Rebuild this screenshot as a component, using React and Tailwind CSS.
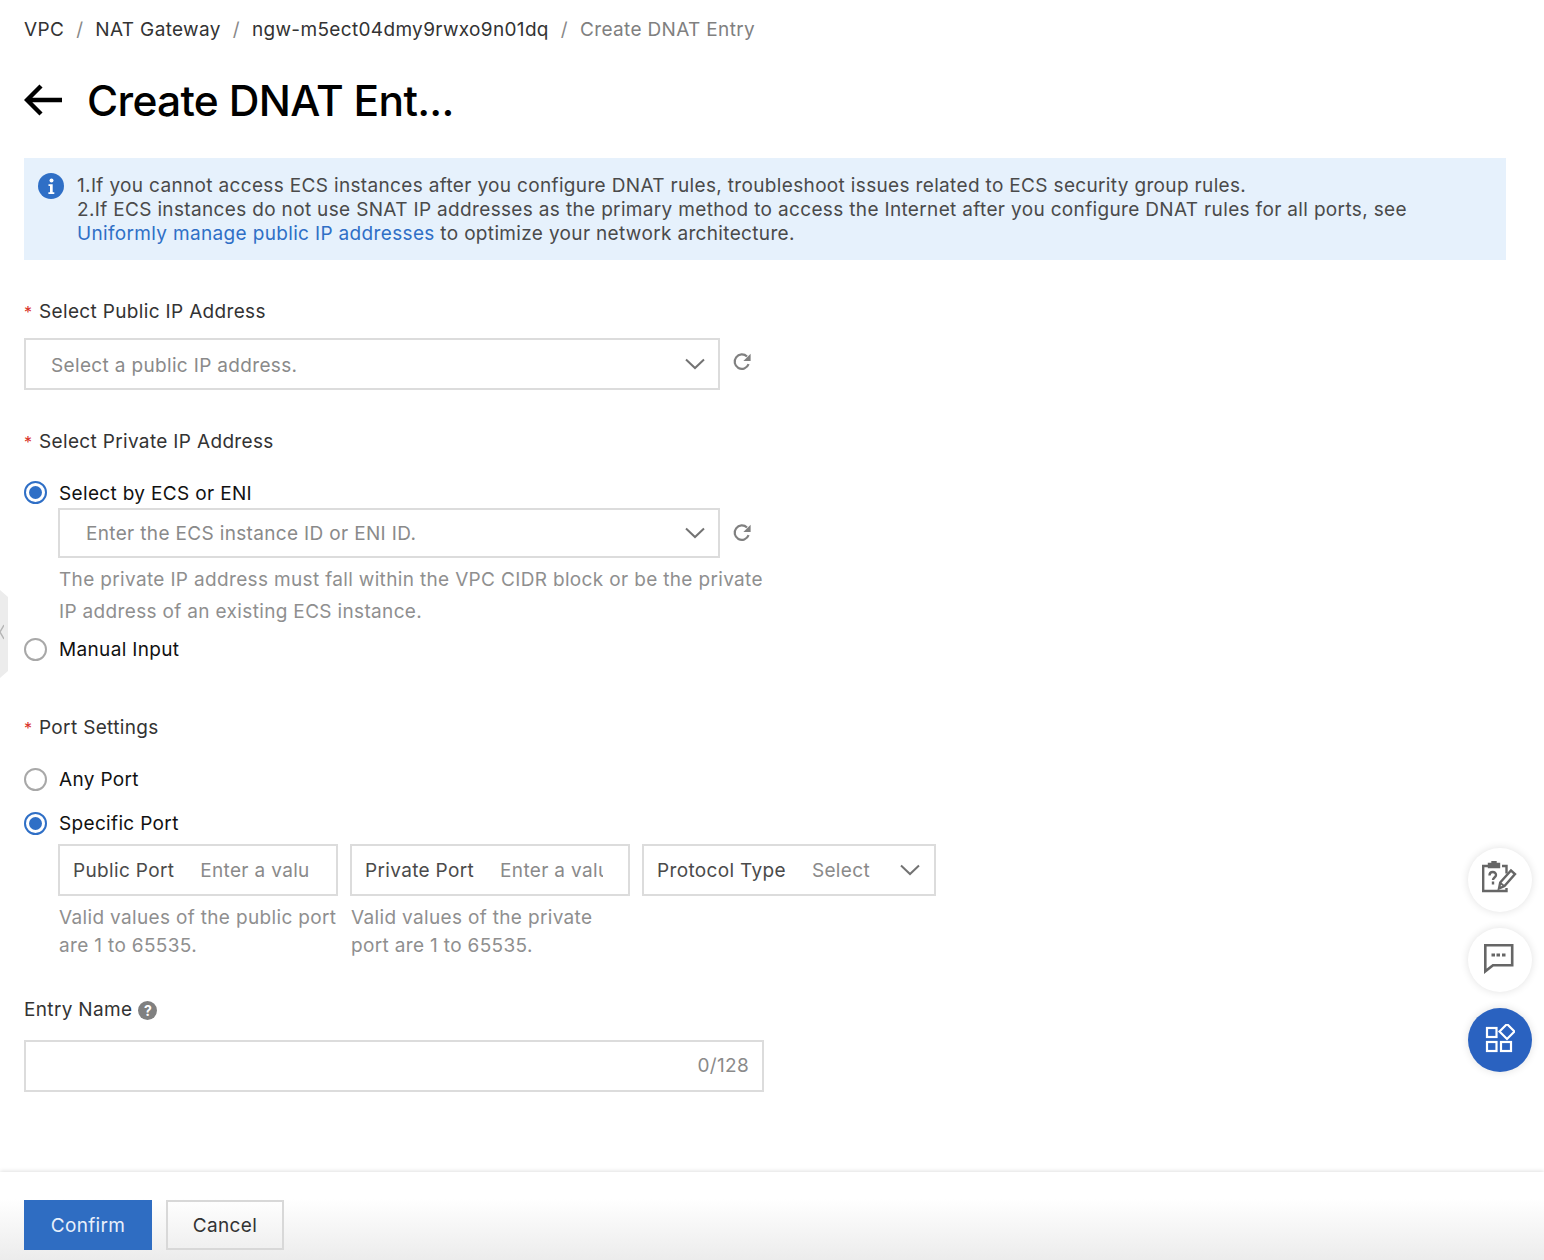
import React from "react";

const Chevron = () => (
  <svg width="20" height="12" viewBox="0 0 20 12" fill="none" stroke="#737373" strokeWidth="2"><path d="M1 1.500 L10 10 L19 1.500" /></svg>
);
const Refresh = () => (
  <svg width="20" height="20" viewBox="0 0 20 20" fill="none">
    <path d="M16.6 12.2A7.2 7.2 0 1 1 15 4.600" stroke="#808080" strokeWidth="2.200" />
    <path d="M18.600 1.800V9h-7.200z" fill="#808080" />
  </svg>
);
const Radio = ({ on }) => (
  <span className={`mt-[-2px] flex h-[23px] w-[23px] shrink-0 items-center justify-center rounded-full border-2 bg-white ${on ? "border-[#2f6fc6]" : "border-[#a8a8a8]"}`}>
    {on && <span className="h-[13px] w-[13px] rounded-full bg-[#2f6fc6]" />}
  </span>
);
const Label = ({ children, className = "" }) => (
  <div className={`flex h-[28px] items-center pt-[2px] text-[#333] ${className}`}>
    <span className="mr-[8px] w-[7px] text-[16px] text-[#d93026]">*</span>
    {children}
  </div>
);
const RadioRow = ({ on, children, className = "", textClass = "" }) => (
  <div className={`flex h-[28px] items-center gap-[12px] text-[#111] ${className}`}><Radio on={on} /><span className={textClass}>{children}</span></div>
);
const Box = ({ className = "", children }) => (
  <div className={`flex items-center border-2 border-[#dcdcdc] bg-white ${className}`}>{children}</div>
);
const Field = ({ label, width }) => (
  <Box className="h-[52px] pl-[13px] pt-[3px]">
    <span className="shrink-0 text-[#4a4a4a]">{label}</span>
    <input readOnly placeholder="Enter a value" className={`ml-[26px] outline-none placeholder:text-[#8a8a8a] ${width}`} />
  </Box>
);

export default function App() {
  return (
    <div className="relative h-[1260px] w-[1544px] overflow-hidden bg-white text-[19px] font-['Inter','Liberation_Sans',sans-serif] tracking-[0.34px] text-[#333]">
      <div className="flex h-[60px] items-center gap-[12px] pl-[24px] pt-[1px] text-[#333]">
        <span>VPC</span><span className="text-[#888]">/</span>
        <span>NAT Gateway</span><span className="text-[#888]">/</span>
        <span>ngw-m5ect04dmy9rwxo9n01dq</span><span className="text-[#888]">/</span>
        <span className="text-[#808080]">Create DNAT Entry</span>
      </div>

      <div className="flex h-[80px] items-center pl-[24px]">
        <svg width="38" height="32" viewBox="0 0 38 32" fill="none" stroke="#000" strokeWidth="4.400"><path d="M38 16H3M17 2 3 16l14 14" /></svg>
        <h1 className="ml-[25px] pt-[2px] text-[42.5px] font-medium tracking-[-0.7px] text-black">Create DNAT Ent...</h1>
      </div>

      <div className="mx-[24px] mt-[18px] flex h-[102px] w-[1482px] bg-[#e6f1fc] pl-[14px] pt-[16px] leading-[24px] text-[#4a4a4a]">
        <svg className="mt-[-1px] shrink-0" width="26" height="26" viewBox="0 0 26 26">
          <circle cx="13" cy="13" r="13" fill="#2f6fc6" />
          <circle cx="13.500" cy="7.500" r="2" fill="#fff" />
          <path d="M10.500 11.200h4.200v8h1.600v1.800H10.400v-1.800h1.600v-6.200h-1.500z" fill="#fff" />
        </svg>
        <div className="ml-[13px]">
          <div>1.If you cannot access ECS instances after you configure DNAT rules, troubleshoot issues related to ECS security group rules.</div>
          <div>2.If ECS instances do not use SNAT IP addresses as the primary method to access the Internet after you configure DNAT rules for all ports, see</div>
          <div><span className="text-[#2f6fc6]">Uniformly manage public IP addresses</span> to optimize your network architecture.</div>
        </div>
      </div>

      <div className="pl-[24px]">
        <Label className="mt-[37px]">Select Public IP Address</Label>
        <div className="mt-[13px] flex items-start">
          <Box className="h-[52px] w-[696px] justify-between pl-[25px] pr-[13px] text-[#8a8a8a]">
            <span className="pt-[4px]">Select a public IP address.</span><Chevron />
          </Box>
          <span className="ml-[12px] mt-[14px]"><Refresh /></span>
        </div>

        <Label className="mt-[37px]">Select Private IP Address</Label>
        <RadioRow on className="mt-[24px]" textClass="pt-[2px]">Select by ECS or ENI</RadioRow>
        <div className="ml-[34px] mt-[1px] flex items-start">
          <Box className="h-[50px] w-[662px] justify-between pl-[26px] pr-[13px] text-[#8a8a8a]">
            <span className="pt-[3px]">Enter the ECS instance ID or ENI ID.</span><Chevron />
          </Box>
          <span className="ml-[12px] mt-[15px]"><Refresh /></span>
        </div>
        <div className="ml-[35px] mt-[6px] w-[740px] leading-[32px] text-[#8f8f8f]">
          The private IP address must fall within the VPC CIDR block or be the private<br />IP address of an existing ECS instance.
        </div>
        <RadioRow className="mt-[8px]">Manual Input</RadioRow>

        <Label className="mt-[49px]">Port Settings</Label>
        <RadioRow className="mt-[25px]">Any Port</RadioRow>
        <RadioRow on className="mt-[16px]">Specific Port</RadioRow>

        <div className="ml-[34px] mt-[6px] flex gap-[12px]">
          <div className="w-[280px]">
            <Field label="Public Port" width="w-[109px]" />
            <div className="ml-[1px] mt-[8px] whitespace-nowrap leading-[28px] text-[#8f8f8f]">Valid values of the public port<br />are 1 to 65535.</div>
          </div>
          <div className="w-[280px]">
            <Field label="Private Port" width="w-[103px]" />
            <div className="ml-[1px] mt-[8px] whitespace-nowrap leading-[28px] text-[#8f8f8f]">Valid values of the private<br />port are 1 to 65535.</div>
          </div>
          <Box className="h-[52px] w-[294px] justify-between pl-[13px] pr-[14px]">
            <span className="pt-[3px] text-[#4a4a4a]">Protocol Type</span>
            <span className="ml-[26px] mr-auto pt-[3px] text-[#8a8a8a]">Select</span>
            <Chevron />
          </Box>
        </div>

        <div className="mt-[36px] flex h-[28px] items-center text-[#333]">
          Entry Name
          <span className="ml-[6px] flex h-[19px] w-[19px] items-center justify-center rounded-full bg-[#808080] text-[14px] font-bold tracking-normal text-white">?</span>
        </div>
        <Box className="mt-[16px] h-[52px] w-[740px] justify-end pr-[13px] pt-[1px] text-[#8a8a8a]">0/128</Box>
      </div>

      <div className="absolute bottom-0 left-0 right-0 flex h-[88px] items-start gap-[14px] bg-gradient-to-b from-white from-30% to-[#ececec] pl-[24px] pt-[28px] shadow-[0_-1px_4px_rgba(0,0,0,0.12)]">
        <button className="h-[50px] w-[128px] bg-[#2f6dc2] pt-[3px] text-[#e8f0fb]">Confirm</button>
        <button className="h-[50px] w-[118px] border-2 border-[#d8d8d8] pt-[3px] text-[#333]">Cancel</button>
      </div>

      <div className="absolute left-0 top-[590px] flex h-[88px] w-[8px] items-center bg-[#ececec] [clip-path:polygon(0_0,100%_8%,100%_92%,0_100%)]">
        <svg width="4" height="16" viewBox="0 0 4 16" fill="none" stroke="#b5b5b5" strokeWidth="1.500" className="mt-[-4px]"><path d="M4 1 0 8l4 7" /></svg>
      </div>

      <div className="absolute left-[1468px] top-[848px] flex flex-col gap-[16px]">
        <div className="flex h-[64px] w-[64px] items-center justify-center rounded-full bg-white shadow-[0_0_8px_rgba(0,0,0,0.12)]">
          <svg className="ml-[-2px] mt-[-4px]" width="36" height="34" viewBox="0 0 36 34" fill="none" stroke="#666" strokeWidth="2.400">
            <path d="M21 5h4.500v7.500M7 5H2.200v25H25.500v-3" />
            <path d="M8 6V3h3.500V1h3v2H18v3z" fill="#666" />
            <path d="M8.500 14.500c0-4.500 6.500-4.500 6.500-.500 0 2.500-3 2.500-3 5" />
            <path d="M12 20.500v3" />
            <path d="M18 27.500l1.200-6L30 9.500l4 3.500L23.500 25z" />
            <path d="M19.500 22l3.500 3" strokeWidth="1.800" />
          </svg>
        </div>
        <div className="flex h-[64px] w-[64px] items-center justify-center rounded-full bg-white shadow-[0_0_8px_rgba(0,0,0,0.12)]">
          <svg className="ml-[-2px] mt-[-2px]" width="30" height="30" viewBox="0 0 30 30" fill="none" stroke="#666" strokeWidth="2.600">
            <path d="M1.300 1.300h26.900v20H9l-7.700 6z" />
            <path d="M7.500 11h3.500M12.500 11h3.500M18 11h3.500" strokeWidth="3" />
          </svg>
        </div>
        <div className="flex h-[64px] w-[64px] items-center justify-center rounded-full bg-[#2a62c0] shadow-[0_0_8px_rgba(0,0,0,0.12)]">
          <svg className="mt-[-2px]" width="30" height="30" viewBox="0 0 30 30" fill="none" stroke="#fff" strokeWidth="2.200">
            <rect x="2" y="4" width="9.500" height="9" />
            <rect x="2" y="18" width="9.500" height="9" />
            <rect x="16" y="18" width="10" height="9" />
            <path d="M22 0 29.500 7.500 22 15 14.500 7.500z" />
          </svg>
        </div>
      </div>
    </div>
  );
}
